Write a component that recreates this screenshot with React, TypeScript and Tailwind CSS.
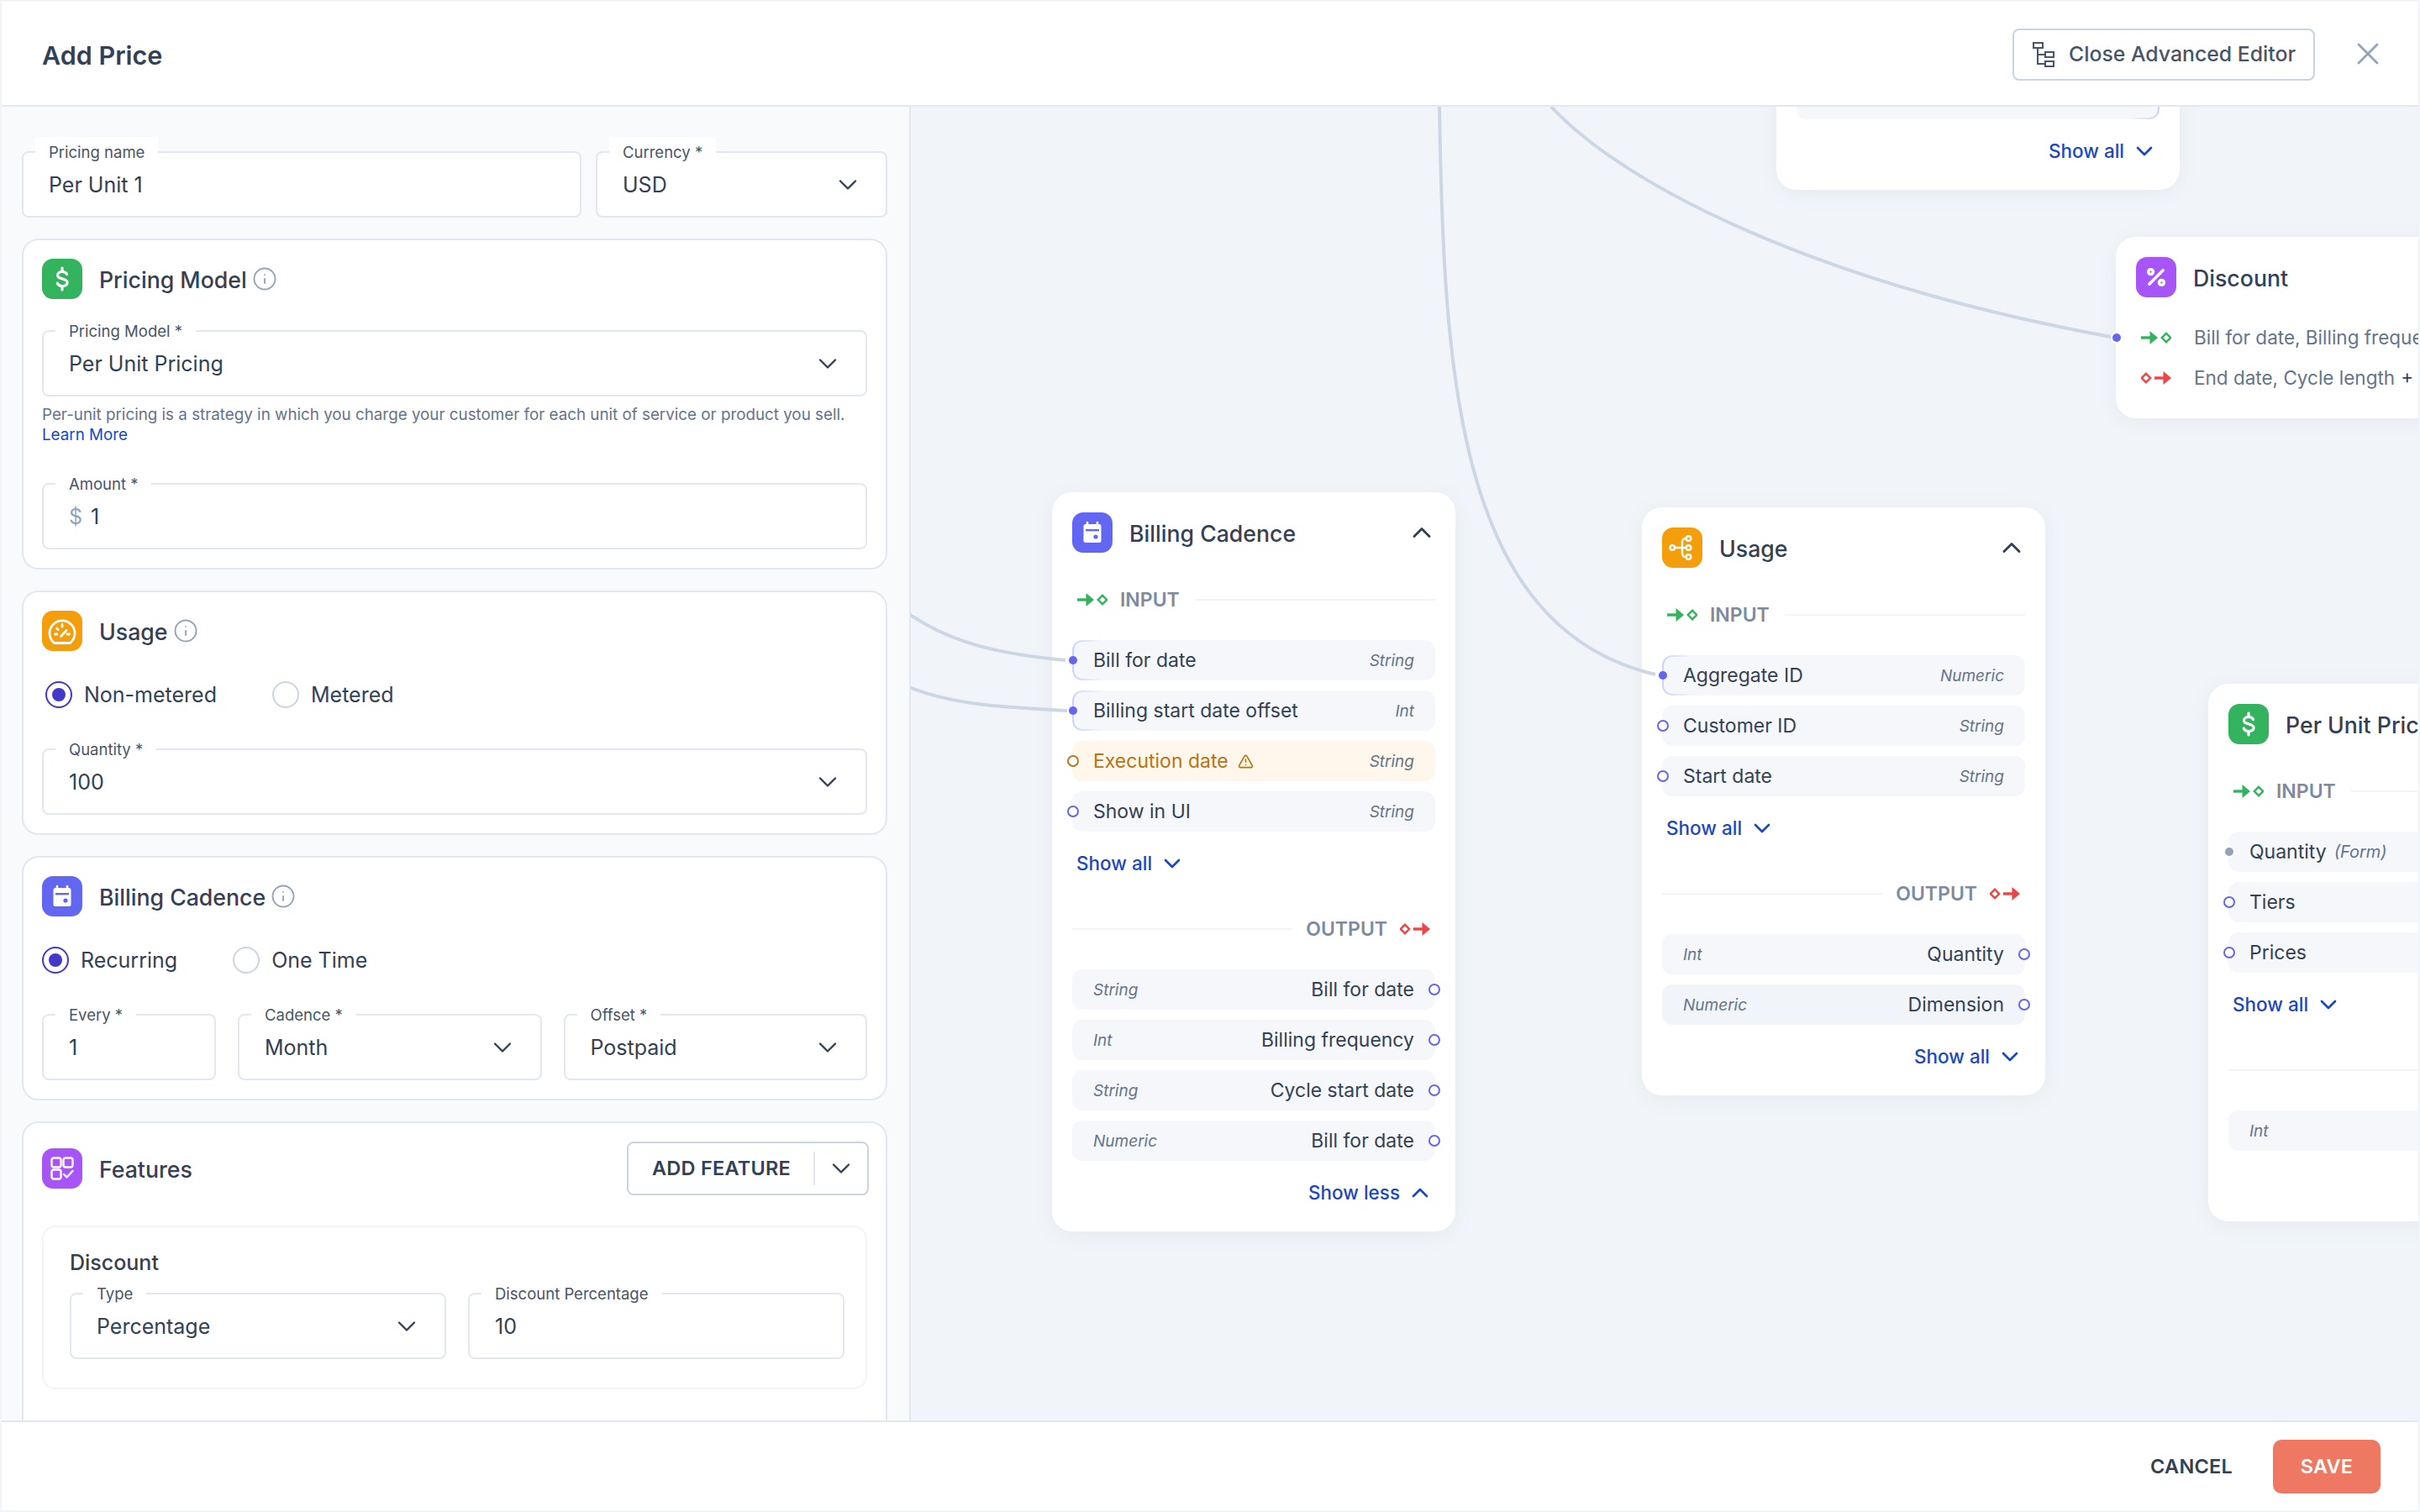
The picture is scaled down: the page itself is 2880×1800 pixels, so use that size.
import { ChevronDown, ChevronUp, Info, Percent, TriangleAlert, X } from "lucide-react";
import type { ReactNode } from "react";

const FONT = "font-['Inter',sans-serif]";

const GaugeIcon = () => (
  <svg width="48" height="48" viewBox="0 0 48 48" fill="none" stroke="white" strokeWidth="2.8" strokeLinecap="round" strokeLinejoin="round">
    <path d="M14.5 38.5A15 15 0 1 1 33.5 38.5Z" />
    <path d="M24 16.5v2.5M15.5 28h2.5M30 28h2.5M17.5 21l1.8 1.8M22.5 30.5L29 23.5" />
  </svg>
);

const CalendarIcon = () => (
  <svg width="48" height="48" viewBox="0 0 48 48" fill="none">
    <path d="M18 12v3M30 12v3" stroke="white" strokeWidth="2.6" strokeLinecap="round" />
    <rect x="13.5" y="14" width="21" height="22" rx="2.5" fill="white" />
    <rect x="16" y="20" width="16" height="2.4" fill="#6366f1" />
    <circle cx="28" cy="29" r="2.6" fill="#6366f1" />
  </svg>
);

const TreeIcon = () => (
  <svg width="48" height="48" viewBox="0 0 48 48" fill="none" stroke="white" strokeWidth="2.4" strokeLinecap="round">
    <circle cx="12.3" cy="24" r="2.8" />
    <circle cx="31.5" cy="13" r="2.8" />
    <circle cx="31.5" cy="24" r="2.8" />
    <circle cx="31.5" cy="35" r="2.8" />
    <path d="M15 24h13.7M24 24v-7a4 4 0 0 1 4-4h.7M24 24v7a4 4 0 0 0 4 4h.7" />
  </svg>
);

const FeaturesIcon = () => (
  <svg width="48" height="48" viewBox="0 0 48 48" fill="none" stroke="white" strokeWidth="2.4" strokeLinecap="round" strokeLinejoin="round">
    <rect x="11.5" y="11.5" width="11" height="11" rx="2.4" />
    <rect x="25.5" y="11.5" width="11" height="11" rx="2.4" />
    <rect x="11.5" y="25.5" width="11" height="11" rx="2.4" />
    <path d="M26 31l3.5 3.5 7-7.5" />
  </svg>
);

const DollarIcon = () => (
  <svg width="48" height="48" viewBox="0 0 48 48" fill="none" stroke="white" strokeWidth="3.2" strokeLinecap="round">
    <path d="M29.6 18.6c-.8-1.9-2.9-3.1-5.6-3.1-3.3 0-5.5 1.7-5.5 4.2 0 5.5 11.6 3 11.6 8.6 0 2.5-2.4 4.2-5.8 4.2-2.9 0-5.2-1.3-6-3.4" />
    <path d="M24 11v4.5M24 32.5V37" />
  </svg>
);

const HierarchyIcon = () => (
  <svg width="26" height="30" viewBox="0 0 26 30" fill="none" stroke="#475569" strokeWidth="2">
    <rect x="1" y="1" width="11" height="6" />
    <rect x="15" y="12" width="10" height="6" />
    <rect x="15" y="23" width="10" height="6" />
    <path d="M6 7v19h9M6 15h9" />
  </svg>
);

const InputArrows = () => (
  <svg width="36" height="16" viewBox="0 0 36 16" className="shrink-0">
    <path d="M0 8h14" stroke="#34b35f" strokeWidth="3.4" />
    <path d="M10.5 0l9.5 8-9.5 8z" fill="#34b35f" />
    <path d="M30 2.8l5.2 5.2-5.2 5.2-5.2-5.2z" fill="none" stroke="#34b35f" strokeWidth="2.4" />
  </svg>
);

const OutputArrows = () => (
  <svg width="36" height="16" viewBox="0 0 36 16" className="shrink-0">
    <path d="M6 2.8l5.2 5.2-5.2 5.2-5.2-5.2z" fill="none" stroke="#ef4444" strokeWidth="2.4" />
    <path d="M16 8h14" stroke="#ef4444" strokeWidth="3.4" />
    <path d="M26.500 0l9.500 8-9.500 8z" fill="#ef4444" />
  </svg>
);

const Field = ({ label, value, select, prefix, className = "" }: { label: string; value: string; select?: boolean; prefix?: string; className?: string }) => (
  <div className={`relative flex h-[79px] items-center justify-between rounded-lg border-2 border-[#e2e8f0] bg-white pl-[30px] pr-[27px] ${className}`}>
    <span className="absolute left-[14px] top-[-19px] bg-white px-[16px] text-[18.5px] leading-[36px] whitespace-nowrap text-[#475569]">{label}</span>
    <span className="mt-[2px] text-[25px] text-[#334155]">
      {prefix && <span className="mr-[10px] text-[#94a3b8]">{prefix}</span>}
      {value}
    </span>
    {select && <ChevronDown size={36} strokeWidth={1.6} className="text-[#334155]" />}
  </div>
);

const IconBox = ({ color, children }: { color: string; children: ReactNode }) => (
  <div className={`flex h-12 w-12 shrink-0 items-center justify-center rounded-[13px] ${color}`}>{children}</div>
);

const SectionHead = ({ icon, title, info }: { icon: ReactNode; title: string; info?: boolean }) => (
  <div className="flex items-center">
    {icon}
    <span className="ml-[20px] mt-[2px] text-[26.7px] font-medium text-[#334155]">{title}</span>
    {info && <Info size={30} strokeWidth={1.5} className="ml-[6px] text-[#94a3b8]" />}
  </div>
);

const Radio = ({ label, checked }: { label: string; checked?: boolean }) => (
  <div className="flex h-8 items-center gap-[14px]">
    <span className={`flex h-8 w-8 items-center justify-center rounded-full border-2 bg-white ${checked ? "border-[#4338ca]" : "border-[#cbd5e1]"}`}>
      {checked && <span className="h-4 w-4 rounded-full bg-[#4338ca]" />}
    </span>
    <span className="text-[25px] leading-8 text-[#334155]">{label}</span>
  </div>
);

const Card = ({ children }: { children: ReactNode }) => (
  <section className="rounded-[20px] border-2 border-[#e2e8f0] bg-white px-[22px] pb-[22px] pt-[22px]">{children}</section>
);

type Port = "line" | "open" | "warn" | "grey";

const Row = ({ name, type, port, side = "in", dark }: { name: ReactNode; type?: string; port?: Port; side?: "in" | "out"; dark?: boolean }) => {
  const warn = port === "warn";
  return (
    <div className={`relative flex h-12 items-center justify-between rounded-xl px-[25px] ${warn ? "bg-[#fff7eb]" : dark ? "bg-[#f1f5f9]" : "bg-[#f5f7fb]"} ${side === "out" ? "flex-row-reverse" : ""}`}>
      {port === "line" && (
        <span className="absolute left-0 top-0 h-full w-[34px] rounded-l-xl border-2 border-r-0 border-[#c7d2fe] [mask-image:linear-gradient(to_right,black,transparent)]" />
      )}
      <span className={`flex items-center text-[23px] ${warn ? "text-[#b7740f]" : "text-[#334155]"}`}>{name}</span>
      <span className="mt-[3px] text-[19px] italic text-[#64748b]">{type}</span>
      {port === "line" && <span className="absolute left-[-4px] h-[10px] w-[10px] rounded-full bg-[#6366f1]" />}
      {port === "grey" && <span className="absolute left-[-4px] h-[10px] w-[10px] rounded-full bg-[#94a3b8] ring-2 ring-white" />}
      {port === "open" && (
        <span className={`absolute h-[14px] w-[14px] rounded-full border-2 border-[#6366f1] bg-white ${side === "out" ? "right-[-6px]" : "left-[-6px]"}`} />
      )}
      {warn && <span className="absolute left-[-6px] h-[14px] w-[14px] rounded-full border-2 border-[#b7791f] bg-white" />}
    </div>
  );
};

const Toggle = ({ label, up, right }: { label: string; up?: boolean; right?: boolean }) => (
  <div className={`mt-[26px] flex h-6 items-center gap-2 text-[22.5px] font-medium text-[#1a48c0] ${right ? "mr-[2px] justify-end" : "ml-[5px]"}`}>
    {label}
    {up ? <ChevronUp size={32} strokeWidth={2} /> : <ChevronDown size={32} strokeWidth={2} />}
  </div>
);

const NodeHead = ({ icon, title }: { icon: ReactNode; title: string }) => (
  <div className="flex items-center">
    {icon}
    <span className="ml-[20px] mt-[2px] flex-1 text-[26.7px] font-medium whitespace-nowrap text-[#334155]">{title}</span>
    <ChevronUp size={36} strokeWidth={1.9} className="mr-[-2px] shrink-0 text-[#334155]" />
  </div>
);

const InputHead = () => (
  <div className="mb-[36px] mt-[44px] flex h-6 items-center">
    <span className="ml-[6px]"><InputArrows /></span>
    <span className="ml-[15px] text-[23px] font-semibold text-[#7c8ba1]">INPUT</span>
    <span className="ml-[18px] h-[2px] flex-1 bg-[#f1f5f9]" />
  </div>
);

const OutputHead = () => (
  <div className="mb-[36px] mt-[54px] flex h-6 items-center">
    <span className="h-[2px] flex-1 bg-[#f1f5f9]" />
    <span className="ml-[16px] text-[23px] font-semibold text-[#7c8ba1]">OUTPUT</span>
    <span className="ml-[15px] mr-[6px]"><OutputArrows /></span>
  </div>
);

const Node = ({ className, children }: { className: string; children: ReactNode }) => (
  <div className={`absolute w-[480px] rounded-[24px] bg-white px-[24px] pb-[34px] pt-[24px] shadow-[0_4px_24px_rgba(100,116,139,0.08)] ${className}`}>{children}</div>
);

const PricingIcon = () => (
  <IconBox color="bg-[#34b35f]"><DollarIcon /></IconBox>
);

const Canvas = () => (
  <div className="relative min-w-0 flex-1 overflow-hidden bg-[#f1f5f9]">
    <Node className="left-[1030px] top-[-100px] pt-[67px]">
      <div className="relative h-12 rounded-xl bg-[#f5f7fb]">
        <span className="absolute right-0 top-0 h-full w-[34px] rounded-r-xl border-2 border-l-0 border-[#c7d2fe] [mask-image:linear-gradient(to_left,black,transparent)]" />
      </div>
      <Toggle label="Show all" right />
    </Node>

    <Node className="left-[168px] top-[459px]">
      <NodeHead icon={<IconBox color="bg-[#6366f1]"><CalendarIcon /></IconBox>} title="Billing Cadence" />
      <InputHead />
      <div className="flex flex-col gap-3">
        <Row name="Bill for date" type="String" port="line" />
        <Row name="Billing start date offset" type="Int" port="line" />
        <Row name={<>Execution date<TriangleAlert size={19} strokeWidth={2} className="ml-[11px]" /></>} type="String" port="warn" />
        <Row name="Show in UI" type="String" port="open" />
      </div>
      <Toggle label="Show all" />
      <OutputHead />
      <div className="flex flex-col gap-3">
        <Row name="Bill for date" type="String" port="open" side="out" />
        <Row name="Billing frequency" type="Int" port="open" side="out" />
        <Row name="Cycle start date" type="String" port="open" side="out" />
        <Row name="Bill for date" type="Numeric" port="open" side="out" />
      </div>
      <Toggle label="Show less" up right />
    </Node>

    <Node className="left-[870px] top-[477px]">
      <NodeHead icon={<IconBox color="bg-[#f59e0b]"><TreeIcon /></IconBox>} title="Usage" />
      <InputHead />
      <div className="flex flex-col gap-3">
        <Row name="Aggregate ID" type="Numeric" port="line" />
        <Row name="Customer ID" type="String" port="open" />
        <Row name="Start date" type="String" port="open" />
      </div>
      <Toggle label="Show all" />
      <OutputHead />
      <div className="flex flex-col gap-3">
        <Row name="Quantity" type="Int" port="open" side="out" />
        <Row name="Dimension" type="Numeric" port="open" side="out" dark />
      </div>
      <Toggle label="Show all" right />
    </Node>

    <Node className="left-[1434px] top-[155px] pb-[36px]">
      <NodeHead icon={<IconBox color="bg-[#a855f7]"><Percent size={28} strokeWidth={3} className="text-white" /></IconBox>} title="Discount" />
      <div className="mt-[36px] flex h-6 items-center text-[22.5px] whitespace-nowrap text-[#64748b]">
        <span className="ml-[6px] mr-[27px]"><InputArrows /></span>
        Bill for date, Billing frequency
      </div>
      <div className="mt-[24px] flex h-6 items-center text-[22.5px] whitespace-nowrap text-[#64748b]">
        <span className="ml-[6px] mr-[27px]"><OutputArrows /></span>
        End date, Cycle length <span className="ml-[7px] text-[#334155]">+ 2</span>
      </div>
      <span className="absolute left-[-4px] top-[115px] h-[10px] w-[10px] rounded-full bg-[#6366f1] ring-2 ring-white" />
    </Node>

    <Node className="left-[1544px] top-[687px]">
      <NodeHead icon={<PricingIcon />} title="Per Unit Pricing" />
      <InputHead />
      <div className="flex flex-col gap-3">
        <Row name={<>Quantity<span className="ml-[9px] text-[20px] italic text-[#64748b]">(Form)</span></>} type="Int" port="grey" />
        <Row name="Tiers" type="String" port="open" />
        <Row name="Prices" type="String" port="open" />
      </div>
      <Toggle label="Show all" />
      <OutputHead />
      <Row name="Amount" type="Int" port="open" side="out" />
      <Toggle label="Show all" right />
    </Node>

    <svg className="pointer-events-none absolute inset-0 h-full w-full" fill="none" stroke="#ccd7e4" strokeWidth="4">
      <path d="M629 -2C634 320 650 620 886 676" />
      <path d="M762 0C850 95 1080 210 1428 274" />
      <path d="M-2 604C50 640 110 652 184 659" />
      <path d="M-2 691C50 712 110 715 186 719" />
    </svg>
  </div>
);

const Panel = () => (
  <div className="h-full w-[1082px] shrink-0 overflow-hidden border-r-2 border-[#e2e8f0] bg-[#f8fafc] pl-[24px] pr-[26px] pt-[53px]">
    <div className="flex gap-[17px]">
      <Field label="Pricing name" value="Per Unit 1" className="flex-1" />
      <Field label="Currency *" value="USD" select className="w-[347px]" />
    </div>

    <div className="mt-[25px] flex flex-col gap-[25px]">
      <Card>
        <SectionHead icon={<PricingIcon />} title="Pricing Model" info />
        <Field label="Pricing Model *" value="Per Unit Pricing" select className="mt-[37px]" />
        <p className="mt-[10px] text-[18.8px] leading-6 whitespace-nowrap text-[#64748b]">
          Per-unit pricing is a strategy in which you charge your customer for each unit of service or product you sell.
          <br />
          <span className="text-[#1a48c0]">Learn More</span>
        </p>
        <Field label="Amount *" value="1" prefix="$" className="mt-[45px]" />
      </Card>

      <Card>
        <SectionHead icon={<IconBox color="bg-[#f59e0b]"><GaugeIcon /></IconBox>} title="Usage" info />
        <div className="ml-[4px] mt-[36px] flex gap-[66px]">
          <Radio label="Non-metered" checked />
          <Radio label="Metered" />
        </div>
        <Field label="Quantity *" value="100" select className="mt-[48px]" />
      </Card>

      <Card>
        <SectionHead icon={<IconBox color="bg-[#6366f1]"><CalendarIcon /></IconBox>} title="Billing Cadence" info />
        <div className="mt-[36px] flex gap-[66px]">
          <Radio label="Recurring" checked />
          <Radio label="One Time" />
        </div>
        <div className="mt-[48px] flex gap-[26px]">
          <Field label="Every *" value="1" className="w-[207px]" />
          <Field label="Cadence *" value="Month" select className="flex-1" />
          <Field label="Offset *" value="Postpaid" select className="flex-1" />
        </div>
      </Card>

      <Card>
        <div className="flex h-16 items-center justify-between">
          <SectionHead icon={<IconBox color="bg-[#a855f7]"><FeaturesIcon /></IconBox>} title="Features" />
          <div className="mr-[-2px] flex h-16 w-[288px] items-center rounded-lg border-2 border-[#cbd5e1] pl-[28px]">
            <span className="text-[23.5px] font-semibold tracking-[0.01em] whitespace-nowrap text-[#334155]">ADD FEATURE</span>
            <span className="ml-[27px] h-10 w-[2px] shrink-0 bg-[#e2e8f0]" />
            <ChevronDown size={36} strokeWidth={1.6} className="ml-[13px] shrink-0 text-[#334155]" />
          </div>
        </div>
        <div className="mb-[60px] mt-[36px] rounded-2xl border-2 border-[#f1f5f9] pb-[34px] pl-[31px] pr-[25px] pt-[26px]">
          <div className="text-[25px] font-medium leading-8 text-[#334155]">Discount</div>
          <div className="mt-[20px] flex gap-[26px]">
            <Field label="Type" value="Percentage" select className="flex-1" />
            <Field label="Discount Percentage" value="10" className="flex-1" />
          </div>
        </div>
      </Card>
    </div>
  </div>
);

export default function App() {
  return (
    <div className={`flex h-[1800px] w-[2880px] flex-col overflow-hidden border-2 border-[#f1f5f9] bg-white ${FONT}`}>
      <header className="flex h-[125px] shrink-0 items-center justify-between border-b-2 border-[#e2e8f0] pl-[48px] pr-[38px]">
        <h1 className="mt-[5px] text-[30.5px] font-semibold text-[#334155]">Add Price</h1>
        <div className="flex items-center gap-[41px]">
          <button className="mt-[3px] flex h-[62px] w-[360px] items-center gap-[17px] rounded-lg border-2 border-[#cbd5e1] pl-[22px] text-[24.8px] font-medium text-[#475569]">
            <HierarchyIcon />
            Close Advanced Editor
          </button>
          <X size={44} strokeWidth={1.5} className="text-[#94a3b8]" />
        </div>
      </header>

      <main className="flex min-h-0 flex-1">
        <Panel />
        <Canvas />
      </main>

      <footer className="flex h-[107px] shrink-0 items-center justify-end gap-[48px] border-t-2 border-[#e2e8f0] pr-[45px]">
        <span className="text-[23.5px] font-semibold tracking-[0.01em] text-[#334155]">CANCEL</span>
        <button className="h-16 w-32 rounded-[10px] bg-[#ef7862] text-[23.5px] font-semibold tracking-[0.01em] text-white">SAVE</button>
      </footer>
    </div>
  );
}
